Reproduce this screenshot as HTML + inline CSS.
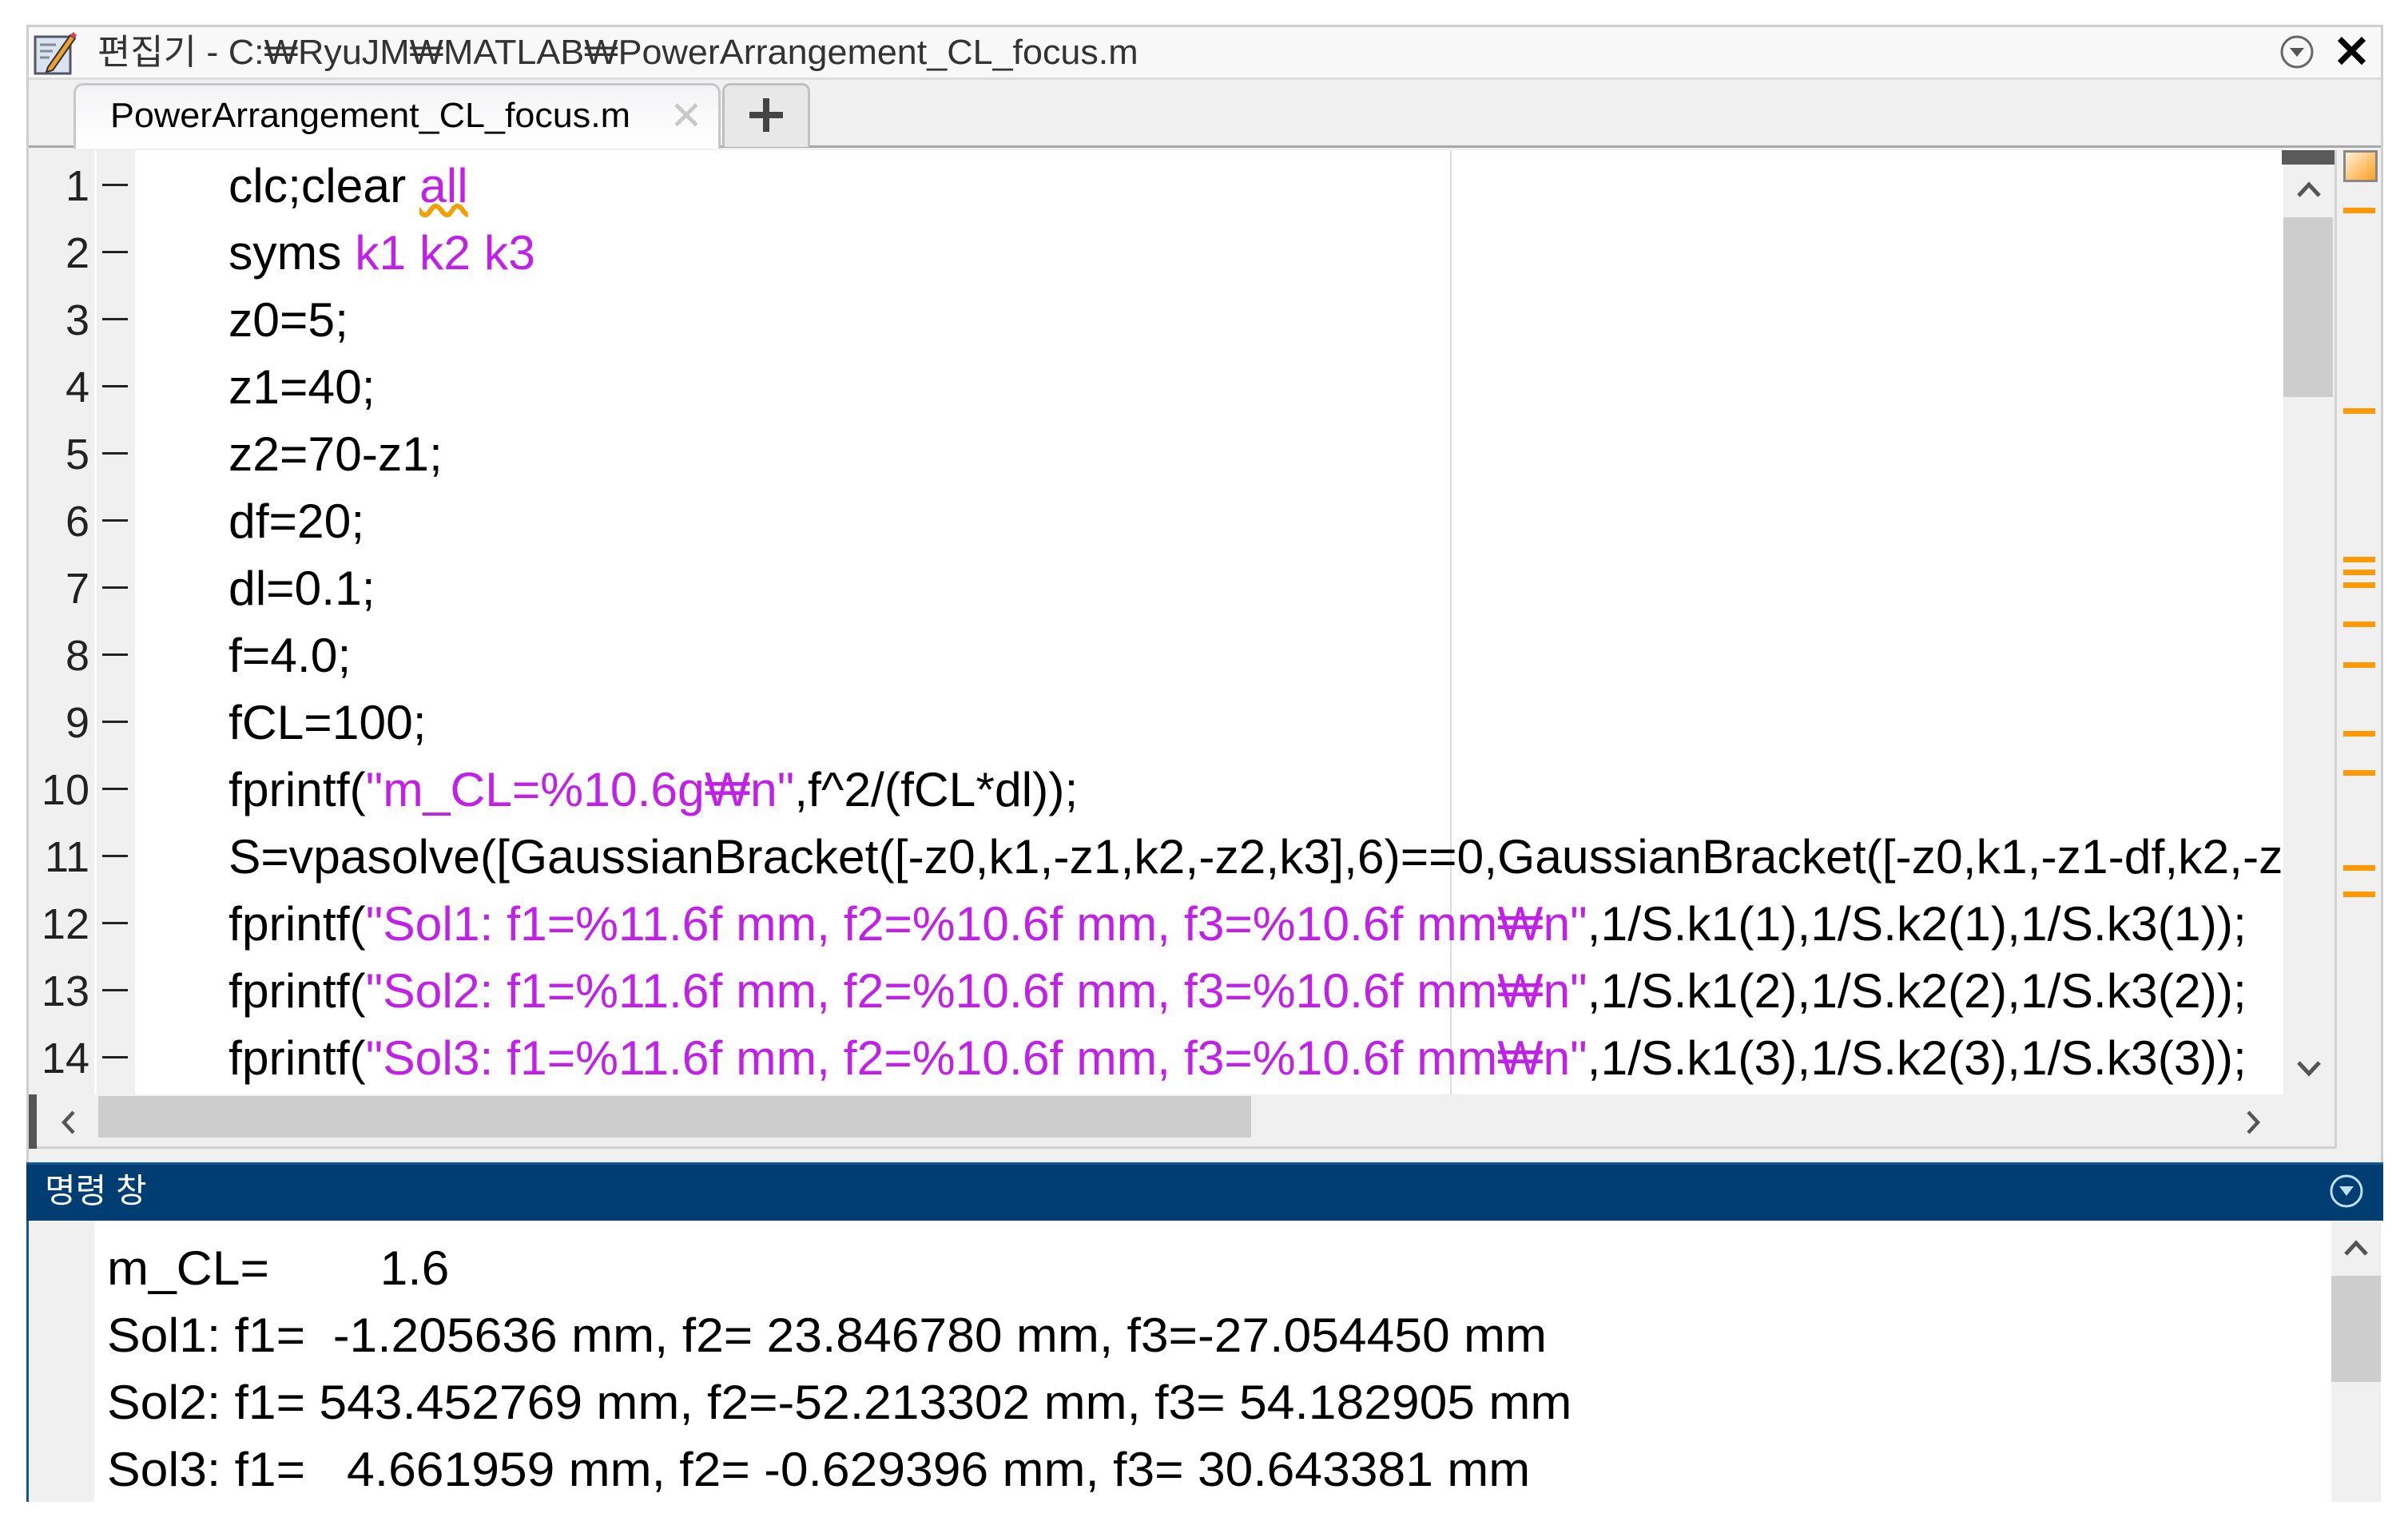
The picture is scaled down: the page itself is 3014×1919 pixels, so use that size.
<!DOCTYPE html>
<html><head><meta charset="utf-8">
<style>
*{margin:0;padding:0;box-sizing:border-box}
body{width:3014px;height:1919px;background:#fff;position:relative;overflow:hidden;font-family:"Liberation Sans","Noto Sans CJK KR",sans-serif;color:#000}
.abs{position:absolute}
#win{left:33px;top:31px;width:2950px;height:1849px;border:3px solid #cfcfcf;border-bottom:none;background:#f0f0f0}
.code{position:absolute;left:286px;font-size:60px;white-space:pre;transform-origin:0 50%;transform:scaleX(1.01);line-height:84px}
.ln{position:absolute;left:40px;width:72px;text-align:right;font-size:54px;color:#222;line-height:84px}
.dash{position:absolute;left:128px;width:32px;height:3px;background:#222}
.p{color:#c020e8}
.out{position:absolute;left:134px;font-size:60px;white-space:pre;transform-origin:0 50%;transform:scaleX(1.04);line-height:84px}
.mk{position:absolute;left:2933px;width:40px;height:7px;background:#ff9900}
</style></head><body>
<div id="win" class="abs"></div>
<!-- title bar -->
<div class="abs" style="left:36px;top:34px;width:2944px;height:66px;background:#f8f8f8;border-bottom:3px solid #dcdcdc"></div>
<svg class="abs" style="left:40px;top:36px" width="60" height="60" viewBox="0 0 30 30">
<rect x="2" y="5" width="22" height="23" fill="#d8e4f0" stroke="#556" stroke-width="1.5"/>
<path d="M5 10h10M5 14h8M5 18h6" stroke="#889" stroke-width="1.5"/>
<path d="M10 24L24 4l3 2L13 26l-4 1z" fill="#f0a030" stroke="#333" stroke-width="1"/>
<path d="M24 4l3 2 1-2-2-2z" fill="#e04060"/>
</svg>
<div class="abs" style="left:122px;top:36px;font-size:44px;color:#333;line-height:60px;white-space:pre;transform-origin:0 50%;transform:scaleX(1.02)">편집기 - C:₩RyuJM₩MATLAB₩PowerArrangement_CL_focus.m</div>
<svg class="abs" style="left:2850px;top:40px" width="50" height="50" viewBox="0 0 50 50"><circle cx="25" cy="25" r="19" fill="none" stroke="#666" stroke-width="3"/><path d="M16 20h18l-9 11z" fill="#555"/></svg>
<div class="abs" style="left:2920px;top:32px;font-size:56px;font-weight:bold;line-height:66px">✕</div>
<!-- tab bar -->
<div class="abs" style="left:36px;top:103px;width:2944px;height:82px;background:#f0f0f0;border-bottom:3px solid #a8a8a8"></div>
<div class="abs" style="left:92px;top:104px;width:810px;height:82px;background:linear-gradient(#f4f4f6,#ffffff);border:3px solid #c8c8c8;border-bottom:none;border-radius:12px 12px 0 0"></div>
<div class="abs" style="left:138px;top:115px;font-size:44px;line-height:60px;white-space:pre;transform-origin:0 50%;transform:scaleX(1.02)">PowerArrangement_CL_focus.m</div>
<div class="abs" style="left:838px;top:112px;font-size:50px;color:#c8c8c8;line-height:66px">✕</div>
<div class="abs" style="left:904px;top:104px;width:110px;height:80px;background:#e8e8e8;border:3px solid #c0c0c0;border-bottom:none;border-radius:10px 10px 0 0"></div>
<div class="abs" style="left:938px;top:140px;width:42px;height:8px;background:#444"></div>
<div class="abs" style="left:955px;top:123px;width:8px;height:42px;background:#444"></div>
<!-- editor -->
<div class="abs" style="left:36px;top:188px;width:2822px;height:1182px;background:#fff"></div>
<div class="abs" style="left:36px;top:188px;width:82px;height:1182px;background:#f0f0f0"></div>
<div class="abs" style="left:121px;top:188px;width:48px;height:1182px;background:#f0f0f0"></div>
<div class="abs" style="left:1815px;top:188px;width:2px;height:1182px;background:#ddd"></div>
<!-- lines -->
<div class="ln" style="top:191px">1</div><div class="dash" style="top:230px"></div>
<div class="ln" style="top:275px">2</div><div class="dash" style="top:314px"></div>
<div class="ln" style="top:359px">3</div><div class="dash" style="top:398px"></div>
<div class="ln" style="top:443px">4</div><div class="dash" style="top:482px"></div>
<div class="ln" style="top:527px">5</div><div class="dash" style="top:566px"></div>
<div class="ln" style="top:611px">6</div><div class="dash" style="top:650px"></div>
<div class="ln" style="top:695px">7</div><div class="dash" style="top:734px"></div>
<div class="ln" style="top:779px">8</div><div class="dash" style="top:818px"></div>
<div class="ln" style="top:863px">9</div><div class="dash" style="top:902px"></div>
<div class="ln" style="top:947px">10</div><div class="dash" style="top:986px"></div>
<div class="ln" style="top:1031px">11</div><div class="dash" style="top:1070px"></div>
<div class="ln" style="top:1115px">12</div><div class="dash" style="top:1154px"></div>
<div class="ln" style="top:1199px">13</div><div class="dash" style="top:1238px"></div>
<div class="ln" style="top:1283px">14</div><div class="dash" style="top:1322px"></div>
<div style="position:absolute;left:0;top:0;width:2858px;height:1370px;overflow:hidden">
<div class="code" style="top:191px">clc;clear <span class="p" style="text-decoration:underline wavy #f0a000">all</span></div>
<div class="code" style="top:275px">syms <span class="p">k1 k2 k3</span></div>
<div class="code" style="top:359px">z0=5;</div>
<div class="code" style="top:443px">z1=40;</div>
<div class="code" style="top:527px">z2=70-z1;</div>
<div class="code" style="top:611px">df=20;</div>
<div class="code" style="top:695px">dl=0.1;</div>
<div class="code" style="top:779px">f=4.0;</div>
<div class="code" style="top:863px">fCL=100;</div>
<div class="code" style="top:947px">fprintf(<span class="p">"m_CL=%10.6g₩n"</span>,f^2/(fCL*dl));</div>
<div class="code" style="top:1031px">S=vpasolve([GaussianBracket([-z0,k1,-z1,k2,-z2,k3],6)==0,GaussianBracket([-z0,k1,-z1-df,k2,-z2-df,k3],6)==0]);</div>
<div class="code" style="top:1115px">fprintf(<span class="p">"Sol1: f1=%11.6f mm, f2=%10.6f mm, f3=%10.6f mm₩n"</span>,1/S.k1(1),1/S.k2(1),1/S.k3(1));</div>
<div class="code" style="top:1199px">fprintf(<span class="p">"Sol2: f1=%11.6f mm, f2=%10.6f mm, f3=%10.6f mm₩n"</span>,1/S.k1(2),1/S.k2(2),1/S.k3(2));</div>
<div class="code" style="top:1283px">fprintf(<span class="p">"Sol3: f1=%11.6f mm, f2=%10.6f mm, f3=%10.6f mm₩n"</span>,1/S.k1(3),1/S.k2(3),1/S.k3(3));</div>
</div>
<!-- vertical scrollbar -->
<div class="abs" style="left:2858px;top:188px;width:64px;height:1182px;background:#f0f0f0"></div>
<div class="abs" style="left:2856px;top:188px;width:66px;height:18px;background:#5a5a5a"></div>
<div class="abs" style="left:2858px;top:272px;width:62px;height:225px;background:#cdcdcd"></div>
<svg class="abs" style="left:2873px;top:225px" width="34" height="24"><path d="M4 20L17 6 30 20" fill="none" stroke="#555" stroke-width="5"/></svg>
<svg class="abs" style="left:2873px;top:1326px" width="34" height="24"><path d="M4 4L17 18 30 4" fill="none" stroke="#555" stroke-width="5"/></svg>
<!-- overview strip -->
<div class="abs" style="left:2922px;top:188px;width:3px;height:1250px;background:#d4d4d4"></div>
<div class="abs" style="left:2925px;top:188px;width:55px;height:1250px;background:#f0f0f0"></div>
<div class="abs" style="left:2933px;top:188px;width:43px;height:40px;background:linear-gradient(135deg,#fff0d8,#ffa020);border:3px solid #888"></div>
<div class="mk" style="top:260px"></div><div class="mk" style="top:511px"></div>
<div class="mk" style="top:697px"></div><div class="mk" style="top:713px"></div><div class="mk" style="top:729px"></div>
<div class="mk" style="top:778px"></div><div class="mk" style="top:829px"></div><div class="mk" style="top:915px"></div>
<div class="mk" style="top:964px"></div><div class="mk" style="top:1083px"></div><div class="mk" style="top:1116px"></div>
<!-- horizontal scrollbar -->
<div class="abs" style="left:36px;top:1370px;width:2886px;height:68px;background:#f0f0f0;border-bottom:3px solid #d0d0d0"></div>
<div class="abs" style="left:36px;top:1370px;width:10px;height:68px;background:#555"></div>
<div class="abs" style="left:123px;top:1372px;width:1443px;height:52px;background:#cdcdcd"></div>
<svg class="abs" style="left:74px;top:1388px" width="24" height="34"><path d="M18 4L6 17 18 30" fill="none" stroke="#555" stroke-width="4.5"/></svg>
<svg class="abs" style="left:2808px;top:1388px" width="24" height="34"><path d="M6 4L18 17 6 30" fill="none" stroke="#555" stroke-width="4.5"/></svg>
<!-- command window -->
<div class="abs" style="left:33px;top:1455px;width:2950px;height:73px;background:#003d73;border-top:3px solid #0a5a9a"></div>
<div class="abs" style="left:56px;top:1460px;font-size:42px;color:#fff;line-height:62px">명령 창</div>
<svg class="abs" style="left:2912px;top:1466px" width="50" height="50" viewBox="0 0 50 50"><circle cx="25" cy="25" r="19" fill="none" stroke="#bfe0f0" stroke-width="3"/><path d="M16 19h18l-9 12z" fill="#bfe0f0"/></svg>
<div class="abs" style="left:33px;top:1528px;width:2950px;height:352px;background:#fff;border-left:3px solid #0a5a9a"></div>
<div class="abs" style="left:36px;top:1528px;width:82px;height:352px;background:#f0f0f0"></div>
<div class="abs" style="left:2918px;top:1528px;width:62px;height:352px;background:#f0f0f0"></div>
<div class="abs" style="left:2918px;top:1597px;width:62px;height:133px;background:#cdcdcd"></div>
<svg class="abs" style="left:2932px;top:1550px" width="34" height="24"><path d="M4 20L17 6 30 20" fill="none" stroke="#555" stroke-width="5"/></svg>
<div class="out" style="top:1546px">m_CL=        1.6</div>
<div class="out" style="top:1630px">Sol1: f1=  -1.205636 mm, f2= 23.846780 mm, f3=-27.054450 mm</div>
<div class="out" style="top:1714px">Sol2: f1= 543.452769 mm, f2=-52.213302 mm, f3= 54.182905 mm</div>
<div class="out" style="top:1798px">Sol3: f1=   4.661959 mm, f2= -0.629396 mm, f3= 30.643381 mm</div>
<div class="abs" style="left:0;top:1880px;width:3014px;height:39px;background:#fff"></div>
</body></html>
